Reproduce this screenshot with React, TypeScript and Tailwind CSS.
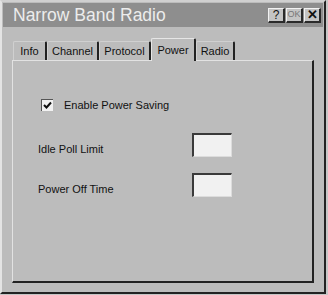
import React from "react";

const tabs = [
  { label: "Info", w: "w-[34px]" },
  { label: "Channel", w: "w-[52px]" },
  { label: "Protocol", w: "w-[52px]" },
  { label: "Power", w: "w-[45px]", active: true },
  { label: "Radio", w: "w-[39px]" },
];

function TitleButton({ children }: { children: React.ReactNode }) {
  return (
    <div className="w-[17px] h-[15px] bg-[#c4c4c4] border-t border-l border-[#f2f2f2] border-r-2 border-b-2 border-r-[#2a2a2a] border-b-[#2a2a2a] flex items-center justify-center text-[12px] leading-none text-[#111]">
      {children}
    </div>
  );
}

function Field({ label }: { label: string }) {
  return (
    <div className="flex items-start justify-between w-[194px]">
      <span className="pt-[10px] leading-[13px]">{label}</span>
      <div className="w-[40px] h-[24px] bg-[#f1f1f1] border-t-2 border-l-2 border-[#3a3a3a] border-r border-b border-r-[#dcdcdc] border-b-[#dcdcdc]" />
    </div>
  );
}

export default function App() {
  return (
    <div
      className="w-[328px] h-[295px] bg-[#c6c6c6]"
      style={{ fontFamily: "'Liberation Sans', Arial, sans-serif" }}
    >
      <div className="w-[326px] h-[294px] bg-[#bcbcbc] border-l-2 border-t-2 border-l-[#e4e4e4] border-t-[#d0d0d0] border-r-2 border-b-2 border-r-[#222] border-b-[#222] flex flex-col">
        <div className="h-[24px] mx-[1px] mt-[1px] bg-[#8e8e8e] flex items-center justify-between pl-[10px] pr-[2px]">
          <span className="text-[17.5px] text-[#ececec]">Narrow Band Radio</span>
          <div className="flex gap-[1px]">
            <TitleButton>?</TitleButton>
            <TitleButton>
              <span className="text-[9px] text-[#777]">OK</span>
            </TitleButton>
            <TitleButton>
              <span className="font-bold text-[13px]">✕</span>
            </TitleButton>
          </div>
        </div>

        <div className="flex items-end ml-[11px] mt-[10px] h-[23px] text-[11px] text-[#111]">
          {tabs.map((t) =>
            t.active ? (
              <div
                key={t.label}
                className={`${t.w} h-[23px] -mb-[1px] relative z-10 bg-[#bcbcbc] border-t border-l border-[#e6e6e6] border-r-2 border-r-[#222] rounded-t-[2px] flex items-start justify-center pt-[3px]`}
              >
                {t.label}
              </div>
            ) : (
              <div
                key={t.label}
                className={`${t.w} h-[19px] bg-[#bcbcbc] border-t border-l border-[#d0d0d0] border-r-2 border-r-[#222] rounded-t-[2px] flex items-center justify-center`}
              >
                {t.label}
              </div>
            )
          )}
        </div>

        <div className="ml-[10px] w-[302px] h-[223px] border-t border-l border-[#e2e2e2] border-r-2 border-b-2 border-r-[#222] border-b-[#222] text-[11px] text-[#111] pl-[25px]">
          <div className="flex items-center gap-[11px] mt-[36px] pl-[3px]">
            <div className="w-[12px] h-[12px] bg-[#f2f2f2] border-t border-l border-[#555] flex items-center justify-center">
              <svg width="9" height="9" viewBox="0 0 9 9">
                <path d="M1 4 L3.5 6.5 L8 1.5" stroke="#111" strokeWidth="2" fill="none" />
              </svg>
            </div>
            <span>Enable Power Saving</span>
          </div>
          <div className="mt-[19px] flex flex-col gap-[16px]">
            <Field label="Idle Poll Limit" />
            <Field label="Power Off Time" />
          </div>
        </div>
      </div>
    </div>
  );
}
